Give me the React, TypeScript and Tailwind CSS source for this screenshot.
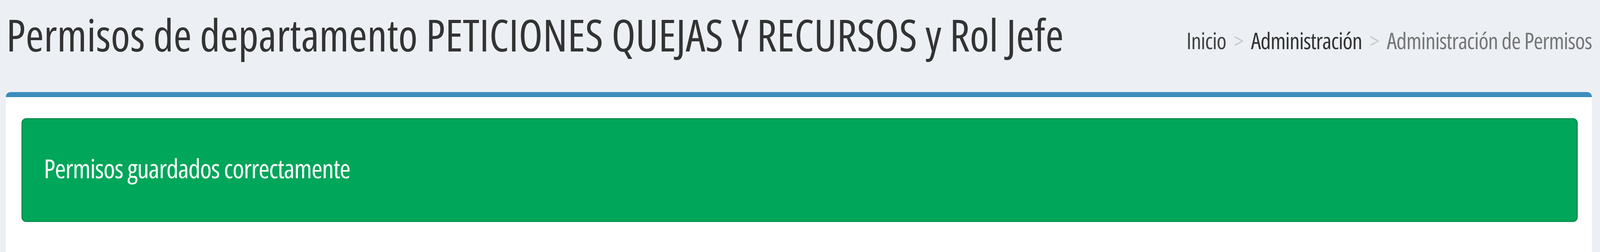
import React from 'react';

const crumbs = [
  { label: 'Inicio', className: 'text-[#444444]' },
  { label: 'Administración', className: 'text-[#333333]' },
  { label: 'Administración de Permisos', className: 'text-[#777777]' },
];

function Breadcrumb() {
  return (
    <ol className="mt-[75px] flex items-center text-[58px] leading-none tracking-[-0.02em] whitespace-nowrap">
      {crumbs.map((crumb, index) => (
        <li key={crumb.label} className="flex items-center">
          {index > 0 && <span className="px-[20px] text-[#cccccc]">&gt;</span>}
          <span className={crumb.className}>{crumb.label}</span>
        </li>
      ))}
    </ol>
  );
}

export default function App() {
  return (
    <div
      className="flex h-[646px] flex-col overflow-hidden bg-[#ecf0f5] pl-[15px] pr-[21px] font-stretch-75%"
      style={{ fontFamily: '"Open Sans", "Source Sans 3", sans-serif' }}
    >
      <header className="flex h-[236px] shrink-0 items-start justify-between">
        <h1 className="mt-[32px] ml-[1px] text-[113px] leading-none font-normal whitespace-nowrap text-[#333333]">
          Permisos de departamento PETICIONES QUEJAS Y RECURSOS y Rol Jefe
        </h1>
        <Breadcrumb />
      </header>

      <section className="flex-1 rounded-t-[12px] border-t-[13px] border-[#3c8dbc] bg-white pt-[54px] pr-[36px] pl-[40px]">
        <div className="flex h-[266px] items-center rounded-[12px] border-[3px] border-[#008d4c] bg-[#00a65a] pb-[11px] pl-[54px] text-[68px] leading-none tracking-[-0.02em] text-white">
          Permisos guardados correctamente
        </div>
      </section>
    </div>
  );
}
